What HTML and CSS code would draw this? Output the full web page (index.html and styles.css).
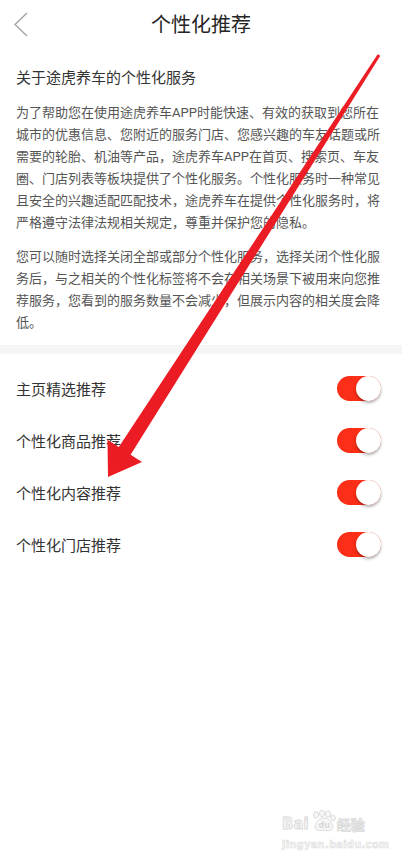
FILE: index.html
```html
<!DOCTYPE html>
<html lang="zh-CN">
<head>
  <meta charset="UTF-8">
  <meta name="viewport" content="width=device-width, initial-scale=1.0">
  <title>个性化推荐</title>
  <link rel="stylesheet" href="styles.css">
</head>
<body>
  <div class="page">
    <header class="nav">
      <svg class="nav-back" width="40" height="50" viewBox="0 0 40 50">
        <polyline points="27,13 15,24.5 27,36" fill="none" stroke="#a0a0a0" stroke-width="1.3"/>
      </svg>
      <h1>个性化推荐</h1>
    </header>

    <section class="intro">
      <h2>关于途虎养车的个性化服务</h2>
      <p>为了帮助您在使用途虎养车APP时能快速、有效的获取到您所在城市的优惠信息、您附近的服务门店、您感兴趣的车友话题或所需要的轮胎、机油等产品，途虎养车APP在首页、搜索页、车友圈、门店列表等板块提供了个性化服务。个性化服务时一种常见且安全的兴趣适配匹配技术，途虎养车在提供个性化服务时，将严格遵守法律法规相关规定，尊重并保护您的隐私。</p>
      <p>您可以随时选择关闭全部或部分个性化服务，选择关闭个性化服务后，与之相关的个性化标签将不会在相关场景下被用来向您推荐服务，您看到的服务数量不会减少，但展示内容的相关度会降低。</p>
    </section>

    <div class="divider"></div>

    <ul class="switch-list">
      <li class="switch-row"><span>主页精选推荐</span><span class="toggle on"></span></li>
      <li class="switch-row"><span>个性化商品推荐</span><span class="toggle on"></span></li>
      <li class="switch-row"><span>个性化内容推荐</span><span class="toggle on"></span></li>
      <li class="switch-row"><span>个性化门店推荐</span><span class="toggle on"></span></li>
    </ul>

    <!-- red annotation arrow drawn over the screenshot -->
    <svg class="mark-arrow" width="402" height="865" viewBox="0 0 402 865">
      <polygon fill="#ec1c24" points="377.7,54.2 380.3,55.8 130.6,454.7 142,462 108,477 107.5,439.8 118.8,447.1"/>
    </svg>

    <div class="watermark">
      <div class="wm-logo">
        <span class="wm-bai">Bai</span>
        <svg class="wm-paw" width="26" height="22" viewBox="0 0 26 22">
          <g fill="#f6f6f6" stroke="#dcdcdc" stroke-width="1">
            <ellipse cx="6" cy="5" rx="2.6" ry="3.2"/>
            <ellipse cx="12" cy="3.5" rx="2.6" ry="3.2"/>
            <ellipse cx="18" cy="4" rx="2.6" ry="3.2"/>
            <ellipse cx="23" cy="8" rx="2.3" ry="2.8"/>
            <path d="M5 17 C6 10 11 8 14 8 C18 8 22 11 23 17 C23 21 18 21 14 20 C10 21 5 21 5 17 Z"/>
          </g>
          <text x="8.5" y="18" class="wm-du">du</text>
        </svg>
        <span class="wm-jy">经验</span>
      </div>
      <div class="wm-url">jingyan.baidu.com</div>
    </div>
  </div>
</body>
</html>
```

FILE: styles.css
```css
html, body {
  margin: 0;
  padding: 0;
  background: #fff;
}
body {
  font-family: Roboto, "Noto Sans CJK SC", sans-serif;
  color: #333;
}
.page {
  position: relative;
  width: 402px;
  height: 865px;
  overflow: hidden;
  background: #fff;
}
.nav {
  position: relative;
  height: 50px;
  display: flex;
  align-items: center;
  justify-content: center;
}
.nav-back {
  position: absolute;
  left: 0;
  top: 0;
}
.nav h1 {
  margin: 0;
  font-size: 20px;
  font-weight: normal;
  line-height: 50px;
  color: #262626;
}
.intro {
  padding: 16.5px 16px 11px;
}
.intro h2 {
  margin: 0 0 13.5px;
  font-size: 15px;
  font-weight: normal;
  line-height: 22px;
  color: #333;
}
.intro p {
  margin: 0;
  font-size: 13px;
  line-height: 22px;
  color: #555;
}
.intro p + p {
  margin-top: 12px;
}
.divider {
  height: 9px;
  background: #f5f5f5;
}
.switch-list {
  list-style: none;
  margin: 0;
  padding: 8px 0 0;
}
.switch-row {
  height: 52px;
  display: flex;
  align-items: center;
  justify-content: space-between;
  padding: 0 21px 0 16px;
  font-size: 15px;
  color: #333;
}
.toggle {
  position: relative;
  width: 44px;
  height: 25px;
  border-radius: 13px;
  background: #ddd;
}
.toggle.on {
  background: #fb2f17;
}
.toggle::after {
  content: "";
  position: absolute;
  top: 0;
  left: 0;
  width: 25px;
  height: 25px;
  border-radius: 50%;
  background: #fff;
  box-shadow: 0 2px 3px rgba(0, 0, 0, 0.3);
}
.toggle.on::after {
  left: 19px;
}
.mark-arrow {
  position: absolute;
  top: 0;
  left: 0;
  pointer-events: none;
}
.watermark {
  position: absolute;
  left: 282px;
  top: 810px;
  width: 94px;
  font-family: "DejaVu Sans", sans-serif;
  color: #f4f4f4;
}
.wm-logo {
  display: flex;
  align-items: flex-end;
}
.wm-bai, .wm-jy {
  font-size: 15px;
  font-weight: bold;
  line-height: 16px;
  color: #f6f6f6;
  -webkit-text-stroke: 0.8px #d8d8d8;
}
.wm-jy {
  font-family: "Noto Sans CJK SC", sans-serif;
  font-size: 14px;
}
.wm-paw {
  margin: 0 1px;
}
.wm-du {
  font-size: 8px;
  font-weight: bold;
  fill: #d8d8d8;
}
.wm-url {
  margin-top: 7px;
  font-size: 10px;
  font-weight: bold;
  letter-spacing: 0.2px;
  color: #f6f6f6;
  -webkit-text-stroke: 0.5px #dadada;
}
```
